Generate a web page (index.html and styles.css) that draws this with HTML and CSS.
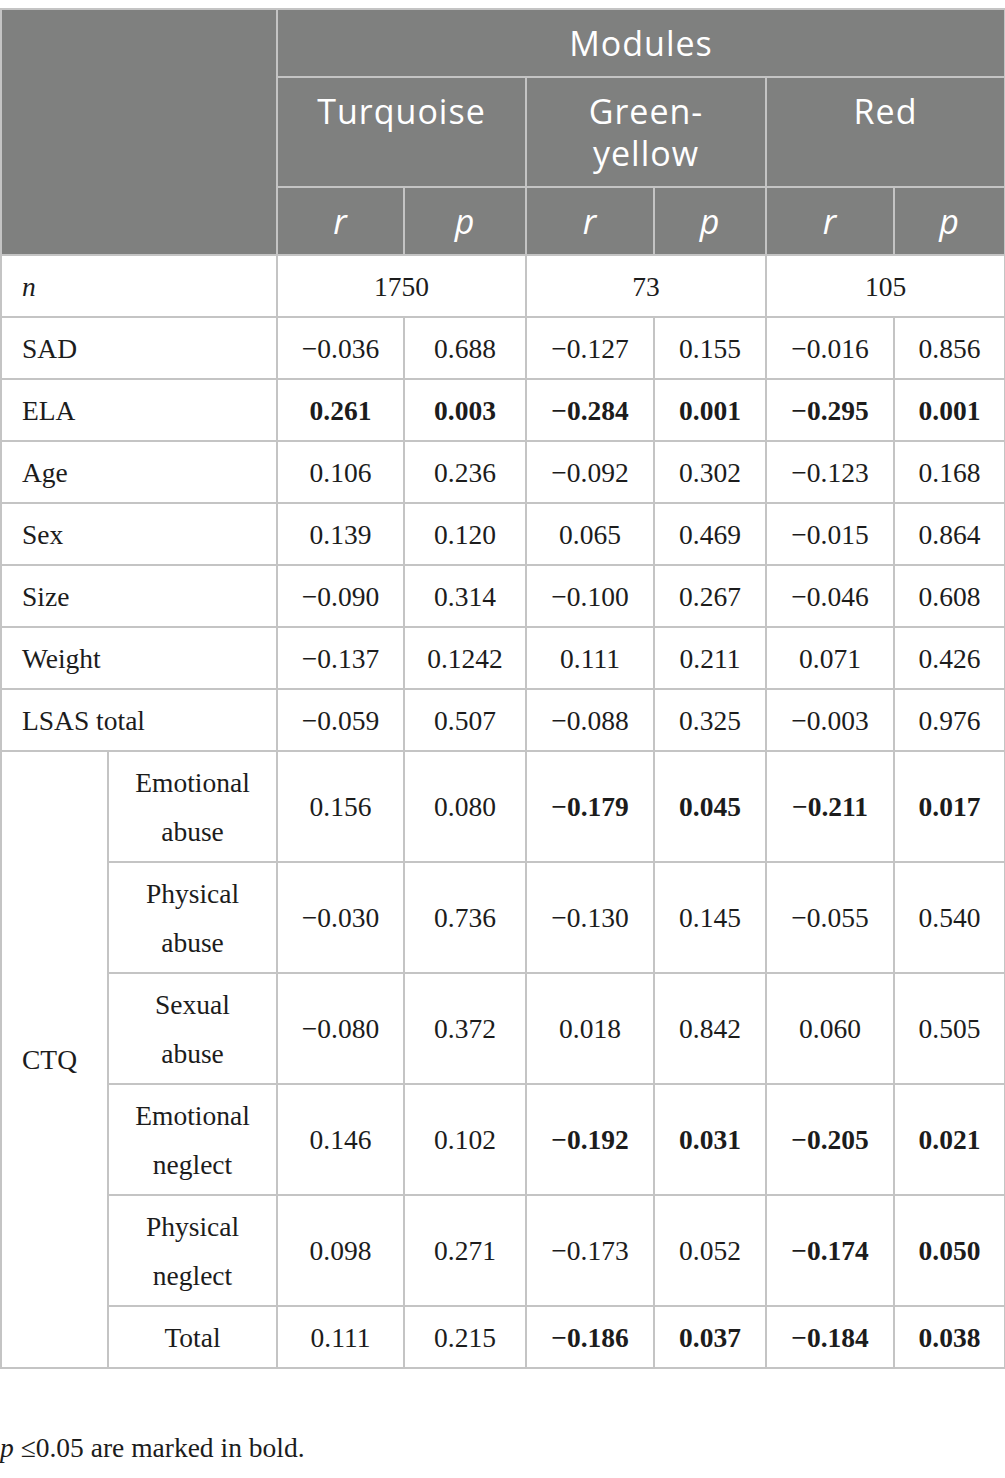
FILE: index.html
```html
<!DOCTYPE html>
<html>
<head>
<meta charset="utf-8">
<link rel="stylesheet" href="styles.css">
</head>
<body>
<table class="tbl">
  <colgroup>
    <col class="c1"><col class="c2"><col class="c3"><col class="c4"><col class="c5"><col class="c6"><col class="c7"><col class="c8">
  </colgroup>
  <thead>
    <tr>
      <th class="hd" colspan="2" rowspan="3"></th>
      <th class="hd" colspan="6">Modules</th>
    </tr>
    <tr class="grp">
      <th class="hd" colspan="2">Turquoise</th>
      <th class="hd" colspan="2">Green-<br>yellow</th>
      <th class="hd" colspan="2">Red</th>
    </tr>
    <tr>
      <th class="hd it">r</th><th class="hd it">p</th>
      <th class="hd it">r</th><th class="hd it">p</th>
      <th class="hd it">r</th><th class="hd it">p</th>
    </tr>
  </thead>
  <tbody>
    <tr><td class="lab it" colspan="2">n</td><td colspan="2">1750</td><td colspan="2">73</td><td colspan="2">105</td></tr>
    <tr><td class="lab" colspan="2">SAD</td><td>−0.036</td><td>0.688</td><td>−0.127</td><td>0.155</td><td>−0.016</td><td>0.856</td></tr>
    <tr><td class="lab" colspan="2">ELA</td><td class="b">0.261</td><td class="b">0.003</td><td class="b">−0.284</td><td class="b">0.001</td><td class="b">−0.295</td><td class="b">0.001</td></tr>
    <tr><td class="lab" colspan="2">Age</td><td>0.106</td><td>0.236</td><td>−0.092</td><td>0.302</td><td>−0.123</td><td>0.168</td></tr>
    <tr><td class="lab" colspan="2">Sex</td><td>0.139</td><td>0.120</td><td>0.065</td><td>0.469</td><td>−0.015</td><td>0.864</td></tr>
    <tr><td class="lab" colspan="2">Size</td><td>−0.090</td><td>0.314</td><td>−0.100</td><td>0.267</td><td>−0.046</td><td>0.608</td></tr>
    <tr><td class="lab" colspan="2">Weight</td><td>−0.137</td><td>0.1242</td><td>0.111</td><td>0.211</td><td>0.071</td><td>0.426</td></tr>
    <tr><td class="lab" colspan="2">LSAS total</td><td>−0.059</td><td>0.507</td><td>−0.088</td><td>0.325</td><td>−0.003</td><td>0.976</td></tr>
    <tr><td class="lab" rowspan="6">CTQ</td><td>Emotional<br>abuse</td><td>0.156</td><td>0.080</td><td class="b">−0.179</td><td class="b">0.045</td><td class="b">−0.211</td><td class="b">0.017</td></tr>
    <tr><td>Physical<br>abuse</td><td>−0.030</td><td>0.736</td><td>−0.130</td><td>0.145</td><td>−0.055</td><td>0.540</td></tr>
    <tr><td>Sexual<br>abuse</td><td>−0.080</td><td>0.372</td><td>0.018</td><td>0.842</td><td>0.060</td><td>0.505</td></tr>
    <tr><td>Emotional<br>neglect</td><td>0.146</td><td>0.102</td><td class="b">−0.192</td><td class="b">0.031</td><td class="b">−0.205</td><td class="b">0.021</td></tr>
    <tr><td>Physical<br>neglect</td><td>0.098</td><td>0.271</td><td>−0.173</td><td>0.052</td><td class="b">−0.174</td><td class="b">0.050</td></tr>
    <tr><td>Total</td><td>0.111</td><td>0.215</td><td class="b">−0.186</td><td class="b">0.037</td><td class="b">−0.184</td><td class="b">0.038</td></tr>
  </tbody>
</table>
<p class="note"><span class="it">p</span> ≤0.05 are marked in bold.</p>
</body>
</html>
```

FILE: styles.css
```css
html, body {
  margin: 0;
  padding: 0;
  background: #ffffff;
}
body {
  font-family: "Liberation Serif", "Times New Roman", serif;
  color: #1c1c1c;
}
.tbl {
  margin-top: 8px;
  width: 1004px;
  table-layout: fixed;
  border-collapse: collapse;
  font-size: 27.5px;
}
.c1 { width: 107px; }
.c2 { width: 169px; }
.c3 { width: 127px; }
.c4 { width: 122px; }
.c5 { width: 128px; }
.c6 { width: 112px; }
.c7 { width: 128px; }
.c8 { width: 111px; }
.tbl th, .tbl td {
  border: 2px solid #c4c4c4;
  text-align: center;
  vertical-align: middle;
}
.hd {
  background: #7f807f;
  color: #ffffff;
  font-family: "Open Sans", "Liberation Sans", sans-serif;
  font-weight: 400;
  font-size: 34px;
  letter-spacing: 1px;
  line-height: 42px;
  padding: 12px 6px;
}
.grp .hd {
  vertical-align: top;
}
.tbl td {
  line-height: 49px;
  padding: 5.5px 6px;
}
.tbl td.lab {
  text-align: left;
  padding-left: 20px;
}
.it { font-style: italic; }
.b { font-weight: 700; }
.note {
  margin: 61px 0 0 0;
  font-size: 27.5px;
  line-height: 36px;
}
```
